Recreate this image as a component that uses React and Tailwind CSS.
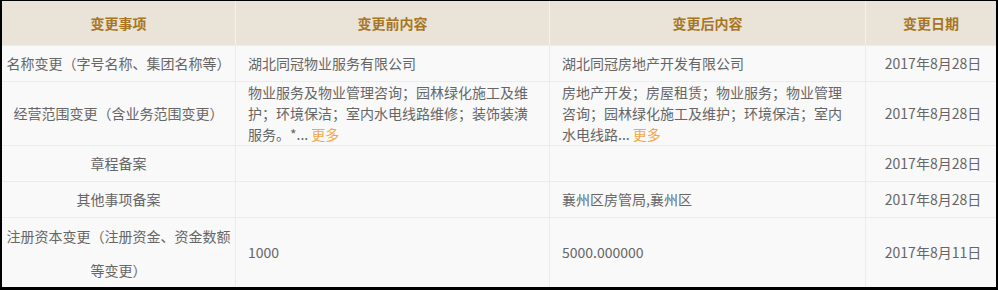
import React from 'react';

const rows = [
  {
    h: 'h-[35px]',
    item: '名称变更（字号名称、集团名称等）',
    before: '湖北同冠物业服务有限公司',
    after: '湖北同冠房地产开发有限公司',
    date: '2017年8月28日',
  },
  {
    h: 'h-[63px]',
    item: '经营范围变更（含业务范围变更）',
    before: '物业服务及物业管理咨询；园林绿化施工及维护；环境保洁；室内水电线路维修；装饰装潢服务。*...',
    beforeMore: true,
    after: '房地产开发；房屋租赁；物业服务；物业管理咨询；园林绿化施工及维护；环境保洁；室内水电线路...',
    afterMore: true,
    date: '2017年8月28日',
  },
  { h: 'h-[35px]', item: '章程备案', before: '', after: '', date: '2017年8月28日' },
  { h: 'h-[35px]', item: '其他事项备案', before: '', after: '襄州区房管局,襄州区', date: '2017年8月28日' },
  {
    h: 'h-[69px]',
    item: '注册资本变更（注册资金、资金数额等变更）',
    itemTall: true,
    before: '1000',
    after: '5000.000000',
    date: '2017年8月11日',
  },
];

function More() {
  return <span className="text-[#f7a54c]"> 更多</span>;
}

export default function App() {
  return (
    <div
      className="w-[998px] h-[290px] bg-black border-l-2 border-t border-r-2 border-b-[3px] border-black text-[14px] text-[#666]"
      style={{ fontFamily: '"Noto Sans CJK SC", "Noto Sans", sans-serif' }}
    >
      <div className="grid grid-cols-[233px_313px_315px_130px] gap-x-px bg-[#f4f0ea] h-[44px]">
        {['变更事项', '变更前内容', '变更后内容', '变更日期'].map(t => (
          <div key={t} className="bg-[#eae3d7] flex items-center justify-center font-bold text-[#a8761f]">
            {t}
          </div>
        ))}
      </div>
      <div className="grid grid-cols-[233px_313px_315px_130px] gap-px bg-[#ececec] pt-px">
        {rows.map(r => (
          <React.Fragment key={r.item}>
            <div className={`${r.h} bg-[#f9f9f9] flex items-center justify-center text-center px-1 ${r.itemTall ? 'leading-[34px]' : 'leading-[21px]'}`}>
              {r.item}
            </div>
            <div className={`${r.h} bg-[#f9f9f9] flex items-center pl-3 pr-3 leading-[21px]`}>
              <div>
                {r.before}
                {r.beforeMore && <More />}
              </div>
            </div>
            <div className={`${r.h} bg-[#f9f9f9] flex items-center pl-3 pr-3 leading-[21px]`}>
              <div>
                {r.after}
                {r.afterMore && <More />}
              </div>
            </div>
            <div className={`${r.h} bg-[#f9f9f9] flex items-center justify-center pl-1`}>
              {r.date}
            </div>
          </React.Fragment>
        ))}
      </div>
    </div>
  );
}
